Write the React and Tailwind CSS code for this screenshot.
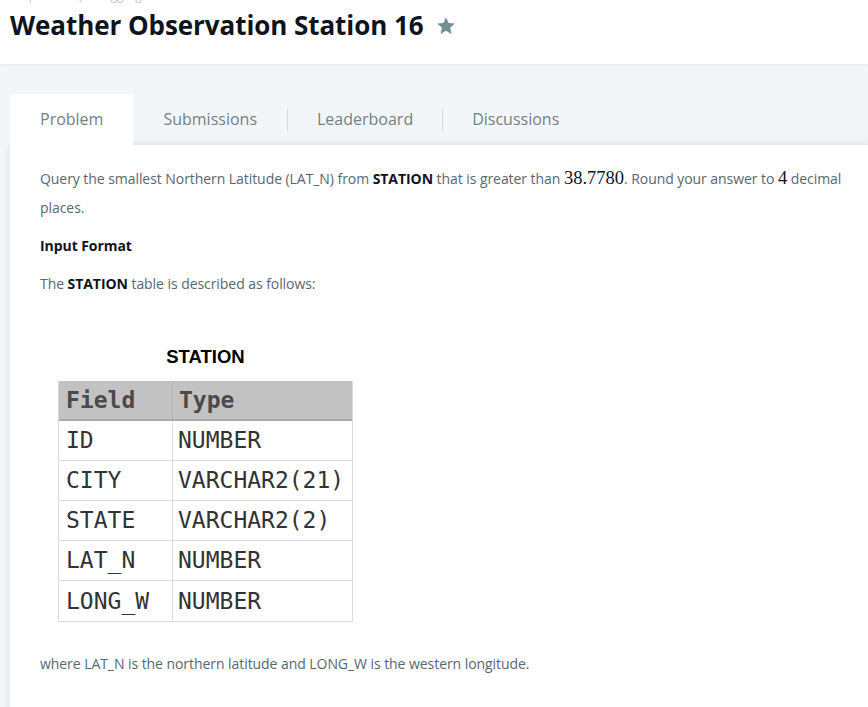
import React from "react";

const rows = [
  ["ID", "NUMBER"],
  ["CITY", "VARCHAR2(21)"],
  ["STATE", "VARCHAR2(2)"],
  ["LAT_N", "NUMBER"],
  ["LONG_W", "NUMBER"],
];

const sans = { fontFamily: '"Open Sans", "Noto Sans", sans-serif' };
const serif = { fontFamily: '"Liberation Serif", "DejaVu Serif", serif' };

export default function App() {
  return (
    <div className="w-[868px] h-[707px] overflow-hidden bg-[#f3f6f8]" style={sans}>
      <header className="relative z-10 h-[64px] bg-white shadow-[0_1px_3px_rgba(0,0,0,0.06)]">
        <div className="h-[4px] overflow-hidden pl-[10px]">
          <div className="-mt-[12px] text-[12px] leading-[16px] text-[#c4cace]">
            Prepare &gt; SQL &gt; Aggregation
          </div>
        </div>
        <div className="flex items-center pl-[10px] pt-[1px]">
          <h1 className="text-[26px] leading-[40px] font-bold text-[#0e141e] tracking-[-0.07px]">
            Weather Observation Station 16
          </h1>
          <svg className="ml-[11px] mt-[2px]" width="22" height="22" viewBox="0 0 24 24">
            <path
              d="M12 2.5l2.9 6.2 6.7.7-5 4.6 1.4 6.7L12 17.3l-5.9 3.4 1.4-6.7-5-4.6 6.7-.7z"
              fill="#738f93"
            />
          </svg>
        </div>
      </header>

      <div className="pl-[10px] pt-[30px]">
        <nav className="flex h-[51px] items-stretch shadow-[inset_0_-6px_6px_-4px_rgba(0,0,0,0.06)]">
          <div className="flex items-center bg-white px-[30px] pb-[2px] text-[16px] text-[#738088]">Problem</div>
          <div className="flex items-center px-[30px] pb-[2px] text-[16px] text-[#738088]">Submissions</div>
          <div className="self-center h-[22px] w-px bg-[#d3d9dd]" />
          <div className="flex items-center px-[29px] pb-[2px] text-[16px] text-[#738088]">Leaderboard</div>
          <div className="self-center h-[22px] w-px bg-[#d3d9dd]" />
          <div className="flex items-center px-[29px] pb-[2px] text-[16px] text-[#738088]">Discussions</div>
        </nav>

        <main className="bg-white pl-[30px] pt-[19px] h-[600px] shadow-[-3px_0_6px_rgba(0,0,0,0.05)] text-[14px] leading-[29px] tracking-[-0.06px] text-[#576871]">
          <p>
            Query the smallest Northern Latitude (LAT_N) from{" "}
            <strong className="font-bold text-[#0e141e]">STATION</strong> that is greater than{" "}
            <span className="text-[18.5px] leading-none text-[#0e141e] tracking-normal" style={serif}>
              38.7780
            </span>
            . Round your answer to{" "}
            <span className="text-[18.5px] leading-none text-[#0e141e]" style={serif}>
              4
            </span>{" "}
            decimal places.
          </p>
          <p className="mt-[9px] font-bold text-[#0e141e]">Input Format</p>
          <p className="mt-[9px]">
            The <strong className="font-bold text-[#0e141e]">STATION</strong> table is described as follows:
          </p>

          <div className="ml-[18px] mt-[47px] w-[295px] tracking-normal">
            <div
              className="text-center text-[18.5px] leading-[24px] font-bold text-black"
              style={{ fontFamily: '"Liberation Sans", Arial, sans-serif' }}
            >
              STATION
            </div>
            <div
              className="mt-[12px] border-x border-b border-[#dcdcdc] text-[23px] text-[#333]"
              style={{ fontFamily: '"DejaVu Sans Mono", "Liberation Mono", monospace' }}
            >
              <div className="flex h-[40px] items-center bg-[#c2c2c2] border-b-2 border-[#a8a8a8] font-bold text-[#4a4a4a]">
                <div className="w-[114px] pl-[7px] border-r border-[#b5b5b5] h-full flex items-center">Field</div>
                <div className="pl-[6px]">Type</div>
              </div>
              {rows.map(([f, t], i) => (
                <div
                  key={f}
                  className={`flex h-[40px] items-center ${i < rows.length - 1 ? "border-b border-[#dcdcdc]" : ""}`}
                >
                  <div className="w-[114px] pl-[7px] border-r border-[#dcdcdc] h-full flex items-center">{f}</div>
                  <div className="pl-[5px] text-[#333]">{t}</div>
                </div>
              ))}
            </div>
          </div>

          <p className="mt-[27px]">where LAT_N is the northern latitude and LONG_W is the western longitude.</p>
        </main>
      </div>
    </div>
  );
}
